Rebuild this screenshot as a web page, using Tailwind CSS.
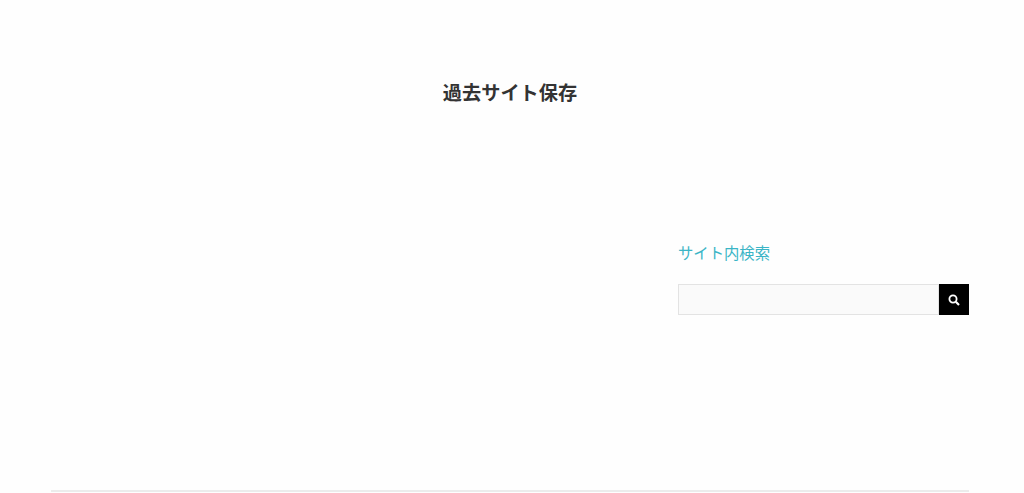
<!DOCTYPE html>
<html lang="ja">
<head>
    <meta charset="UTF-8">
    <meta name="viewport" content="width=device-width, initial-scale=1.0">
    <title>過去サイト保存</title>
    <script src="https://cdn.jsdelivr.net/npm/@tailwindcss/browser@4"></script>
</head>
<body class="bg-[#fefefe] font-['Liberation_Sans','Noto_Sans_CJK_JP',sans-serif] h-[493px] overflow-hidden">
    <div class="w-[1020px]">
        <header class="pt-[80px] h-[240px] text-center">
            <h1 class="text-[19.2px] leading-[28px] font-bold text-[#333]">過去サイト保存</h1>
        </header>
        <div class="w-[918px] mx-auto flex justify-end">
            <aside class="w-[291px]">
                <h2 class="pt-px text-[15.35px] leading-[26px] text-[#3ab5c6]">サイト内検索</h2>
                <form class="flex mt-[17px] h-[31px]">
                    <input type="text" class="flex-1 min-w-0 bg-[#fafafa] border border-[#e3e3e3] outline-none">
                    <button type="button" class="w-[30.5px] bg-black flex items-center justify-center">
                        <svg width="12" height="12" viewBox="0 0 12 12" fill="none" stroke="white">
                            <circle cx="5" cy="5" r="3.6" stroke-width="1.8"/>
                            <path d="M7.8 7.8 L11 11" stroke-width="2.2"/>
                        </svg>
                    </button>
                </form>
            </aside>
        </div>
        <footer class="w-[918px] mx-auto mt-[175px] border-t-2 border-[#ececec]"></footer>
    </div>
</body>
</html>
